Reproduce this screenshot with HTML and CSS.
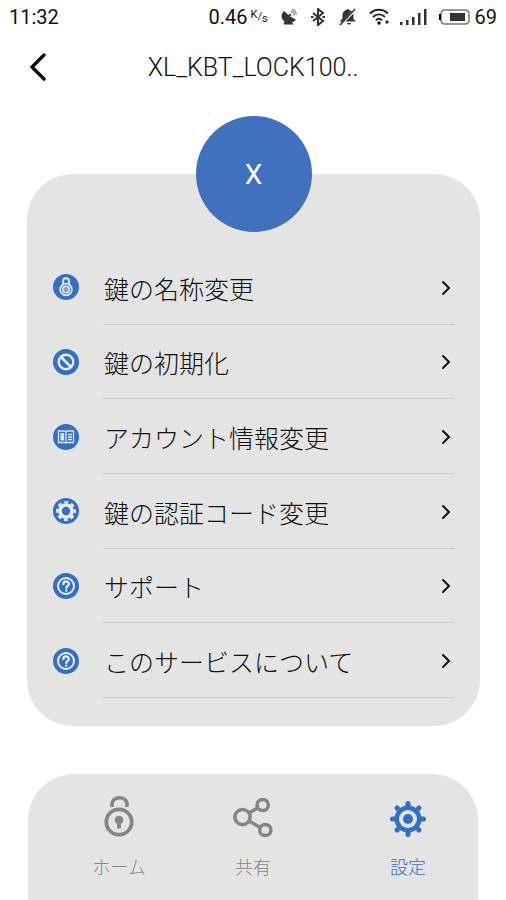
FILE: index.html
```html
<!DOCTYPE html>
<html lang="ja">
<head>
<meta charset="utf-8">
<meta name="viewport" content="width=device-width, initial-scale=1">
<title>設定</title>
<link rel="stylesheet" href="styles.css">
</head>
<body>
<svg class="sprite" aria-hidden="true">
  <symbol id="chevron" viewBox="0 0 10 16"><path d="M2 2l6 6-6 6" fill="none" stroke="currentColor" stroke-width="2" stroke-linecap="round"/></symbol>
  <symbol id="help" viewBox="0 0 26 26">
    <circle cx="13" cy="13" r="13" fill="#356fc4"/>
    <circle cx="13" cy="13" r="8" fill="none" stroke="#e6edf7" stroke-width="2"/>
    <path d="M10.300 11.200c0-3.600 5.600-3.600 5.600-.3 0 2-2.600 2-2.600 4.200" fill="none" stroke="#e6edf7" stroke-width="2.200" stroke-linecap="round"/>
    <circle cx="13.200" cy="17.600" r="1.200" fill="#e6edf7"/>
  </symbol>
</svg>
<div class="screen">
  <div class="status">
    <span class="time">11:32</span>
    <div class="indicators">
      <span class="speed">0.46</span>
      <span class="unit"><span>K</span><span class="slash">/</span><span class="per">s</span></span>
      <svg class="dish" width="16" height="16" viewBox="0 0 16 16"><path d="M3 2C-1 6 .5 11 3.500 12.500L2.500 15.500h10l-1.500-2.500c2 0 3-1 4-2.500L9 7.500 10.500 6 9 4.600 7.500 6z" fill="#333"/><path d="M10 2.500a4 4 0 0 1 3.300 4M11 .5a6 6 0 0 1 4.300 5" fill="none" stroke="#777" stroke-width="1.200"/></svg>
      <svg class="bluetooth" width="14" height="18" viewBox="0 0 14 18"><path d="M2 5l10 8-5 4V1l5 4-10 8" fill="none" stroke="#333" stroke-width="2"/><path d="M0 9h2.500M11.500 9H14" stroke="#333" stroke-width="2"/></svg>
      <svg class="bell" width="18" height="18" viewBox="0 0 18 18"><path d="M1 13l2.500-2.500V7c0-3 2-4.500 4-5 0-1.500 2.500-1.500 2.500 0l3 1L3 14zM14.500 5.500V11l2.500 2.500H6.500zM8 15h4c-.5 2-3.500 2-4 0z" fill="#333"/><path d="M16 1L1 17" stroke="#333" stroke-width="1.700"/></svg>
      <svg class="wifi" width="22" height="18" viewBox="0 0 22 18"><g fill="none" stroke="#222" stroke-width="1.800"><path d="M1 5.500c5-5 13-5 18 0M4 9c3.500-3.500 8.500-3.500 12 0M6.800 12.300c2-2 4.400-2 6.400 0"/></g><circle cx="10" cy="15" r="1.700"/><circle cx="18" cy="14" r="1.700" fill="#333"/></svg>
      <svg class="signal" width="27" height="16" viewBox="0 0 27 16"><path d="M0 13h2.500v3H0zM6 11h2.500v5H6zM12 8h2.500v8H12zM18 4h2.500v12H18zM24 0h2.500v16H24z" fill="#333"/></svg>
      <svg class="battery" width="32" height="18" viewBox="0 0 32 18"><path d="M7 2h20q4 0 4 4v6q0 4-4 4H7q-4 0-4-4V6q0-4 4-4z" fill="none" stroke="#777" stroke-width="1.500"/><path d="M3 6v6H1V6z"/><path d="M12 5h15v8H12z" fill="#333"/></svg>
      <span class="level">69</span>
    </div>
  </div>
  <header class="header">
    <button class="back" type="button" aria-label="戻る"><svg width="18" height="28" viewBox="0 0 18 28"><path d="M15 2L3 14l12 12" fill="none" stroke="#000" stroke-width="3.300" stroke-linecap="round"/></svg></button>
    <h1 class="title">XL_KBT_LOCK100..</h1>
  </header>
  <main class="card">
    <div class="avatar">X</div>
    <ul class="menu">
      <li><a class="item" href="#name">
        <svg class="icon" viewBox="0 0 26 26"><circle cx="13" cy="13" r="13" fill="#356fc4"/><path d="M10 10V7.500c0-4.400 6-4.400 6 0V10" fill="none" stroke="#e6edf7" stroke-width="1.900"/><circle cx="13" cy="15.500" r="5.900" fill="none" stroke="#e6edf7" stroke-width="1.700"/><circle cx="13" cy="15.500" r="3.300" fill="#7c9fd6" stroke="#e6edf7" stroke-width="1.500"/></svg>
        <span class="label">鍵の名称変更<svg class="chevron"><use href="#chevron"/></svg></span></a></li>
      <li><a class="item" href="#reset">
        <svg class="icon" viewBox="0 0 26 26"><circle cx="13" cy="13" r="13" fill="#356fc4"/><circle cx="13" cy="13" r="7.300" fill="none" stroke="#e6edf7" stroke-width="2.400"/><path d="M8 8l10 10" stroke="#e6edf7" stroke-width="2.600"/></svg>
        <span class="label">鍵の初期化<svg class="chevron"><use href="#chevron"/></svg></span></a></li>
      <li><a class="item" href="#account">
        <svg class="icon" viewBox="0 0 26 26"><circle cx="13" cy="13" r="13" fill="#356fc4"/><path d="M5.500 7h5.500q2 0 2 1 0-1 2-1h5.500v11.500H15q-2 0-2 1 0-1-2-1H5.500z" fill="none" stroke="#dce6f5" stroke-width="1.300"/><path d="M7.500 9h3.700v7.500H7.500z" fill="#dce6f5"/><path d="M13 8v11M15 10.500h4M15 13h4M15 15.500h4" stroke="#dce6f5" stroke-width="1.300"/></svg>
        <span class="label">アカウント情報変更<svg class="chevron"><use href="#chevron"/></svg></span></a></li>
      <li><a class="item" href="#code">
        <svg class="icon" viewBox="0 0 26 26"><circle cx="13" cy="13" r="13" fill="#356fc4"/><circle cx="13" cy="13" r="8.700" fill="none" stroke="#e6edf7" stroke-width="2.600" stroke-dasharray="3.900 2.933" stroke-dashoffset="1.950"/><circle cx="13" cy="13" r="6" fill="none" stroke="#e6edf7" stroke-width="3.600"/></svg>
        <span class="label">鍵の認証コード変更<svg class="chevron"><use href="#chevron"/></svg></span></a></li>
      <li><a class="item" href="#support">
        <svg class="icon"><use href="#help"/></svg>
        <span class="label">サポート<svg class="chevron"><use href="#chevron"/></svg></span></a></li>
      <li><a class="item" href="#about">
        <svg class="icon"><use href="#help"/></svg>
        <span class="label">このサービスについて<svg class="chevron"><use href="#chevron"/></svg></span></a></li>
    </ul>
  </main>
  <nav class="tabs">
    <a class="tab" href="#home">
      <svg width="40" height="44" viewBox="0 0 40 44"><g fill="none" stroke="#858585"><path d="M13 12V9.500c0-9 15-9 15 0V12" stroke-width="3.600"/><circle cx="20" cy="27" r="12.700" stroke-width="3.800"/></g><circle cx="20" cy="25" r="4.300" fill="#858585"/><path d="M20 25v8.500" stroke="#858585" stroke-width="3.800"/></svg>
      <span>ホーム</span></a>
    <a class="tab" href="#share">
      <svg width="40" height="44" viewBox="0 0 40 44"><g fill="none" stroke="#858585" stroke-width="3.500"><circle cx="9.500" cy="22" r="7.600"/><circle cx="29.700" cy="10" r="5.600"/><circle cx="32.300" cy="35" r="5.600"/><path d="M16 18l8.500-5M15.800 26l11.500 6.500"/></g></svg>
      <span>共有</span></a>
    <a class="tab active" href="#settings">
      <svg width="40" height="44" viewBox="0 0 40 44"><g stroke="#356fc4" stroke-width="5" stroke-linecap="round"><path d="M20 8.500v31M4.500 24h31M9 13l22 22M31 13L9 35"/></g><circle cx="20" cy="24" r="13.500" fill="#356fc4"/><circle cx="20" cy="24" r="9" fill="#e4e4e4"/><circle cx="20" cy="24" r="5" fill="#356fc4"/></svg>
      <span>設定</span></a>
  </nav>
</div>
</body>
</html>
```
FILE: styles.css
```css
* {
  box-sizing: border-box;
}

body {
  margin: 0;
  background: #fff;
  color: #111;
  font-family: Roboto, "Noto Sans CJK JP", sans-serif;
}

a {
  color: inherit;
  text-decoration: none;
}

.sprite {
  position: absolute;
  width: 0;
  height: 0;
}

.screen {
  display: flex;
  flex-direction: column;
  min-height: 100vh;
}

.status {
  display: flex;
  align-items: center;
  justify-content: space-between;
  height: 34px;
  padding: 0 9px;
  font-size: 20px;
}

.indicators {
  display: flex;
  align-items: center;
}

.unit {
  display: flex;
  width: 19px;
  margin: 0 11px 0 3px;
  font-size: 11px;
  line-height: 16px;
}

.unit .slash {
  padding-top: 2px;
}

.unit .per {
  padding-top: 4px;
}

.dish,
.bluetooth {
  margin-right: 14px;
}

.bell {
  margin-right: 12px;
}

.wifi {
  margin-right: 9px;
}

.signal {
  margin-right: 11px;
}

.battery {
  margin-right: 5px;
}

.header {
  display: grid;
  grid-template-columns: 60px 1fr 60px;
  align-items: center;
  height: 66px;
  padding: 0 8px;
}

.back {
  display: flex;
  padding: 0 0 0 21px;
  border: 0;
  background: none;
}

.title {
  margin: 0;
  font-size: 25px;
  font-weight: 300;
  text-align: center;
}

.card {
  margin: 74px 26px 0 27px;
  padding: 0 26px 28px;
  border-radius: 46px;
  background: #e4e4e4;
}

.avatar {
  display: flex;
  align-items: center;
  justify-content: center;
  width: 116px;
  height: 116px;
  margin: -58px auto 18px;
  border-radius: 50%;
  background: #3f71bf;
  color: #fff;
  font-size: 28px;
}

.menu {
  display: grid;
  grid-template-rows: repeat(6, 1fr);
  min-height: 448px;
  margin: 0;
  padding: 0;
  list-style: none;
}

.item {
  display: flex;
  align-items: center;
  gap: 24px;
  height: 100%;
  font-size: 25px;
  font-weight: 300;
}

.icon {
  flex: none;
  width: 26px;
  height: 26px;
}

.label {
  display: flex;
  flex: 1;
  align-items: center;
  justify-content: space-between;
  height: 100%;
  padding: 2px 3px 0 1px;
  border-bottom: 1px solid #c9c9c9;
}

.chevron {
  width: 10px;
  height: 16px;
}

.tabs {
  display: grid;
  flex: 1;
  grid-template-columns: repeat(3, 1fr);
  align-items: start;
  margin: 48px 28px 0;
  padding: 21px 24px 0;
  border-radius: 46px 46px 0 0;
  background: #e4e4e4;
}

.tab {
  display: flex;
  flex-direction: column;
  align-items: center;
  gap: 16px;
  color: #858585;
  font-size: 18px;
  font-weight: 300;
  line-height: 26px;
}

.tab.active {
  padding-left: 42px;
  color: #356fc4;
}
```
